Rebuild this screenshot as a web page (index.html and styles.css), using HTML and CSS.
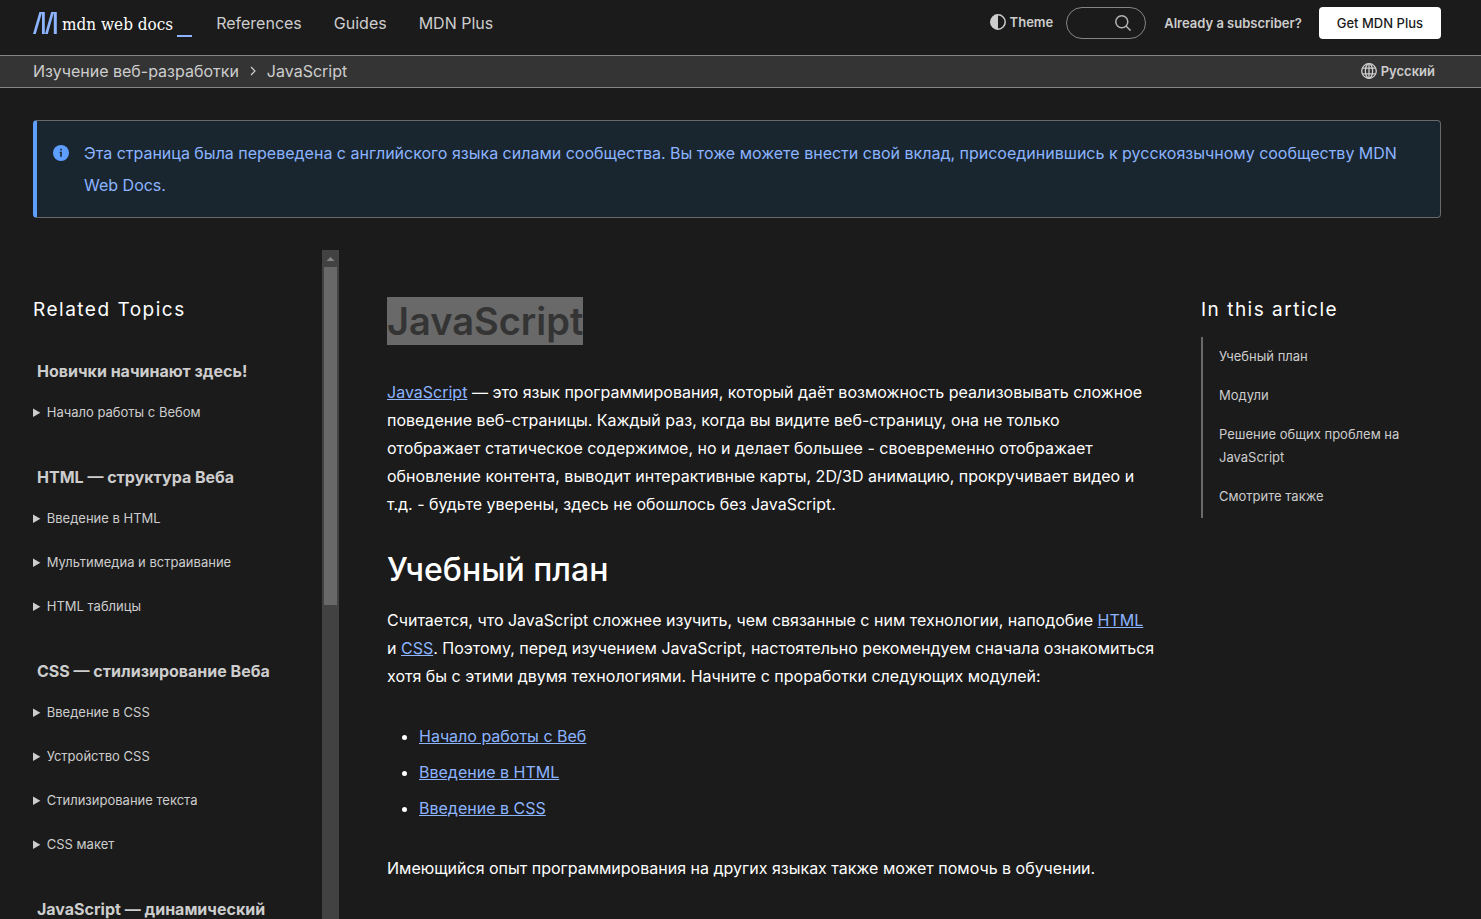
FILE: index.html
```html
<!DOCTYPE html>
<html lang="ru">
<head>
<meta charset="utf-8">
<meta name="viewport" content="width=device-width, initial-scale=1">
<title>JavaScript - Изучение веб-разработки | MDN</title>
<link rel="stylesheet" href="styles.css">
</head>
<body>
<header class="top">
  <a class="logo" href="#" aria-label="MDN home">
    <svg class="logo-mark" viewBox="0 0 24 22" aria-hidden="true"><path d="M0 22 6.4 0h2.8L2.8 22zM9 0h2.8v22H9zM12 22 18.2 0H21l-6.2 22zM20.8 0h3v22h-3z"/></svg>
    <span class="logo-text">mdn web docs</span><span class="logo-cursor"></span>
  </a>
  <nav class="nav">
    <a href="#">References</a>
    <a href="#">Guides</a>
    <a href="#">MDN Plus</a>
  </nav>
  <div class="tools">
    <button class="plain" type="button"><svg class="icon" viewBox="0 0 16 16" aria-hidden="true"><circle cx="8" cy="8" r="7.2" fill="none" stroke="currentColor" stroke-width="1.5"/><path d="M8 .5a7.5 7.5 0 0 0 0 15z" fill="currentColor"/></svg>Theme</button>
    <form class="search">
      <input type="search" aria-label="Search MDN">
      <button type="submit" aria-label="Search"><svg class="icon" viewBox="0 0 16 16" fill="none" stroke="currentColor" stroke-width="1.5" aria-hidden="true"><circle cx="6.8" cy="6.8" r="6"/><path d="M11 11l4.6 4.6"/></svg></button>
    </form>
    <a class="login" href="#">Already a subscriber?</a>
    <a class="cta" href="#">Get MDN Plus</a>
  </div>
</header>
<div class="crumbs">
  <nav class="trail" aria-label="Breadcrumb">
    <a href="#">Изучение веб-разработки</a>
    <svg class="chevron" viewBox="0 0 6 10" fill="none" stroke="currentColor" stroke-width="1.2" aria-hidden="true"><path d="M1 1l4 4-4 4"/></svg>
    <a href="#">JavaScript</a>
  </nav>
  <button class="plain" type="button"><svg class="icon" viewBox="0 0 16 16" fill="none" stroke="currentColor" stroke-width="1.3" aria-hidden="true"><circle cx="8" cy="8" r="7.3"/><ellipse cx="8" cy="8" rx="3.6" ry="7.3"/><path d="M8 .7v14.6M1.4 5.2h13.2M1.4 10.8h13.2"/></svg>Русский</button>
</div>
<aside class="notice">
  <svg class="icon" viewBox="0 0 16 16" aria-hidden="true"><circle cx="8" cy="8" r="8" fill="#5e9eff"/><path d="M7.2 3.8h1.6v1.7H7.2zM6.6 6.8h2.2v5H7.2V8h-.6z" fill="#192630"/></svg>
  <a href="#">Эта страница была переведена с английского языка силами сообщества. Вы тоже можете внести свой вклад, присоединившись к русскоязычному сообществу MDN Web Docs.</a>
</aside>
<div class="page">
  <div class="sidebar">
    <nav class="topics" aria-label="Related Topics">
      <h2 class="side-title">Related Topics</h2>
      <h3>Новички начинают здесь!</h3>
      <ul>
        <li><details><summary>Начало работы с Вебом</summary></details></li>
      </ul>
      <h3>HTML — структура Веба</h3>
      <ul>
        <li><details><summary>Введение в HTML</summary></details></li>
        <li><details><summary>Мультимедиа и встраивание</summary></details></li>
        <li><details><summary>HTML таблицы</summary></details></li>
      </ul>
      <h3>CSS — стилизирование Веба</h3>
      <ul>
        <li><details><summary>Введение в CSS</summary></details></li>
        <li><details><summary>Устройство CSS</summary></details></li>
        <li><details><summary>Стилизирование текста</summary></details></li>
        <li><details><summary>CSS макет</summary></details></li>
      </ul>
      <h3>JavaScript — динамический</h3>
    </nav>
    <div class="scrollbar" aria-hidden="true">
      <svg class="arrow" viewBox="0 0 17 17"><path d="M4.5 11h8l-4-4z" fill="#858585"/></svg>
      <div class="thumb"></div>
    </div>
  </div>
  <main class="article">
    <h1><span class="selected">JavaScript</span></h1>
    <p><a href="#">JavaScript</a> — это язык программирования, который даёт возможность реализовывать сложное поведение веб-страницы. Каждый раз, когда вы видите веб-страницу, она не только отображает статическое содержимое, но и делает большее - своевременно отображает обновление контента, выводит интерактивные карты, 2D/3D анимацию, прокручивает видео и т.д. - будьте уверены, здесь не обошлось без JavaScript.</p>
    <h2>Учебный план</h2>
    <p>Считается, что JavaScript сложнее изучить, чем связанные с ним технологии, наподобие <a href="#">HTML</a> и <a href="#">CSS</a>. Поэтому, перед изучением JavaScript, настоятельно рекомендуем сначала ознакомиться хотя бы с этими двумя технологиями. Начните с проработки следующих модулей:</p>
    <ul>
      <li><a href="#">Начало работы с Веб</a></li>
      <li><a href="#">Введение в HTML</a></li>
      <li><a href="#">Введение в CSS</a></li>
    </ul>
    <p>Имеющийся опыт программирования на других языках также может помочь в обучении.</p>
  </main>
  <nav class="toc" aria-label="In this article">
    <h2 class="side-title">In this article</h2>
    <ul>
      <li><a href="#">Учебный план</a></li>
      <li><a href="#">Модули</a></li>
      <li><a href="#">Решение общих проблем на JavaScript</a></li>
      <li><a href="#">Смотрите также</a></li>
    </ul>
  </nav>
</div>
</body>
</html>
```
FILE: styles.css
```css
* { box-sizing: border-box; }

body {
  margin: 0;
  height: 100vh;
  overflow: hidden;
  display: flex;
  flex-direction: column;
  background: #1b1b1b;
  color: #fff;
  font: 16px/28px Inter, "Noto Sans", sans-serif;
}

a { color: inherit; text-decoration: none; }
h1, h2, h3, p, ul { margin: 0; padding: 0; }
.icon { width: 16px; height: 16px; flex: none; }

.top {
  display: flex;
  align-items: center;
  padding: 7px 40px 16px 33px;
  color: #cdcdcd;
}
.logo { display: flex; align-items: center; color: #fff; height: 32px; }
.logo-mark { width: 24px; height: 22px; margin-right: 5px; fill: #8cb4ff; }
.logo-text { padding-top: 2px; font: 17px/32px "DejaVu Serif Condensed", "DejaVu Serif", serif; }
.logo-cursor { width: 15px; height: 2px; margin-left: 4px; margin-bottom: 2px; align-self: flex-end; background: #8cb4ff; }
.nav { display: flex; gap: 32px; margin-left: 24px; line-height: 32px; }

.tools { display: flex; align-items: center; margin-left: auto; font-size: 13px; line-height: 30px; font-weight: 600; }
.plain {
  display: flex;
  align-items: center;
  gap: 4px;
  padding: 0 0 2px;
  border: 0;
  background: none;
  color: #cdcdcd;
  font: 600 13px/30px Inter, "Noto Sans", sans-serif;
}
.search {
  display: flex;
  align-items: center;
  width: 80px;
  height: 32px;
  margin: 0 18px 0 13px;
  padding: 0 14px;
  border: 1px solid #858585;
  border-radius: 16px;
}
.search input { flex: 1; min-width: 0; padding: 0; border: 0; outline: 0; background: none; color: #fff; }
.search button { display: flex; padding: 0; border: 0; background: none; color: #b3b3b3; }
.cta {
  margin-left: 17px;
  padding: 0 18px;
  border-radius: 4px;
  background: #fff;
  color: #1b1b1b;
  font-weight: 500;
  line-height: 32px;
}

.crumbs {
  display: flex;
  justify-content: space-between;
  align-items: center;
  height: 33px;
  padding: 0 46px 0 33px;
  border: solid #858585;
  border-width: 1px 0;
  background: #343434;
  color: #cdcdcd;
}
.trail { display: flex; align-items: center; gap: 11px; padding-bottom: 1px; }
.chevron { width: 6px; height: 10px; }

.notice {
  display: flex;
  gap: 15px;
  margin: 32px 40px 32px 33px;
  padding: 16px 40px 16px 16px;
  border: 1px solid #696969;
  border-left: 4px solid #5e9eff;
  border-radius: 4px;
  background: #192630;
  color: #8cb4ff;
  line-height: 32px;
}
.notice .icon { margin-top: 8px; }

.page {
  flex: 1;
  min-height: 0;
  display: grid;
  grid-template-columns: 308px minmax(0, 1fr) 240px;
  grid-template-rows: minmax(0, 1fr);
  gap: 46px;
  padding: 0 40px 0 33px;
}

.side-title { font-size: 19px; font-weight: 400; line-height: 24px; letter-spacing: 1.5px; }

.sidebar { display: flex; justify-content: space-between; padding-right: 2px; overflow: hidden; }
.topics { padding-top: 48px; color: #cdcdcd; }
.topics .side-title { margin-bottom: 35px; color: #fff; }
.topics h3 { padding-left: 4px; font-size: 16px; font-weight: 700; line-height: 28px; }
.topics ul { margin: 5px 0 29px; list-style: none; }
.topics summary { font-size: 13px; line-height: 44px; }

.scrollbar { width: 17px; background: #424242; }
.arrow { display: block; width: 17px; height: 17px; }
.thumb { height: 338px; margin: 0 2px; background: #686868; }

.article { padding-top: 47px; }
.article h1 { margin-bottom: 32px; font-size: 38px; font-weight: 600; line-height: 49px; }
.selected { padding: 1px 0; background: #696969; color: #343434; }
.article h2 { margin: 32px 0 16px; font-size: 32px; font-weight: 500; line-height: 40px; }
.article a { color: #8cb4ff; text-decoration: underline; }
.article ul { margin: 32px 0; padding-left: 32px; }
.article li + li { margin-top: 8px; }

.toc { padding-top: 48px; }
.toc ul { margin-top: 15px; padding: 0 0 2px 16px; border-left: 2px solid #696969; list-style: none; }
.toc li { padding: 8px 0; color: #cdcdcd; font-size: 13px; line-height: 23px; }
```
